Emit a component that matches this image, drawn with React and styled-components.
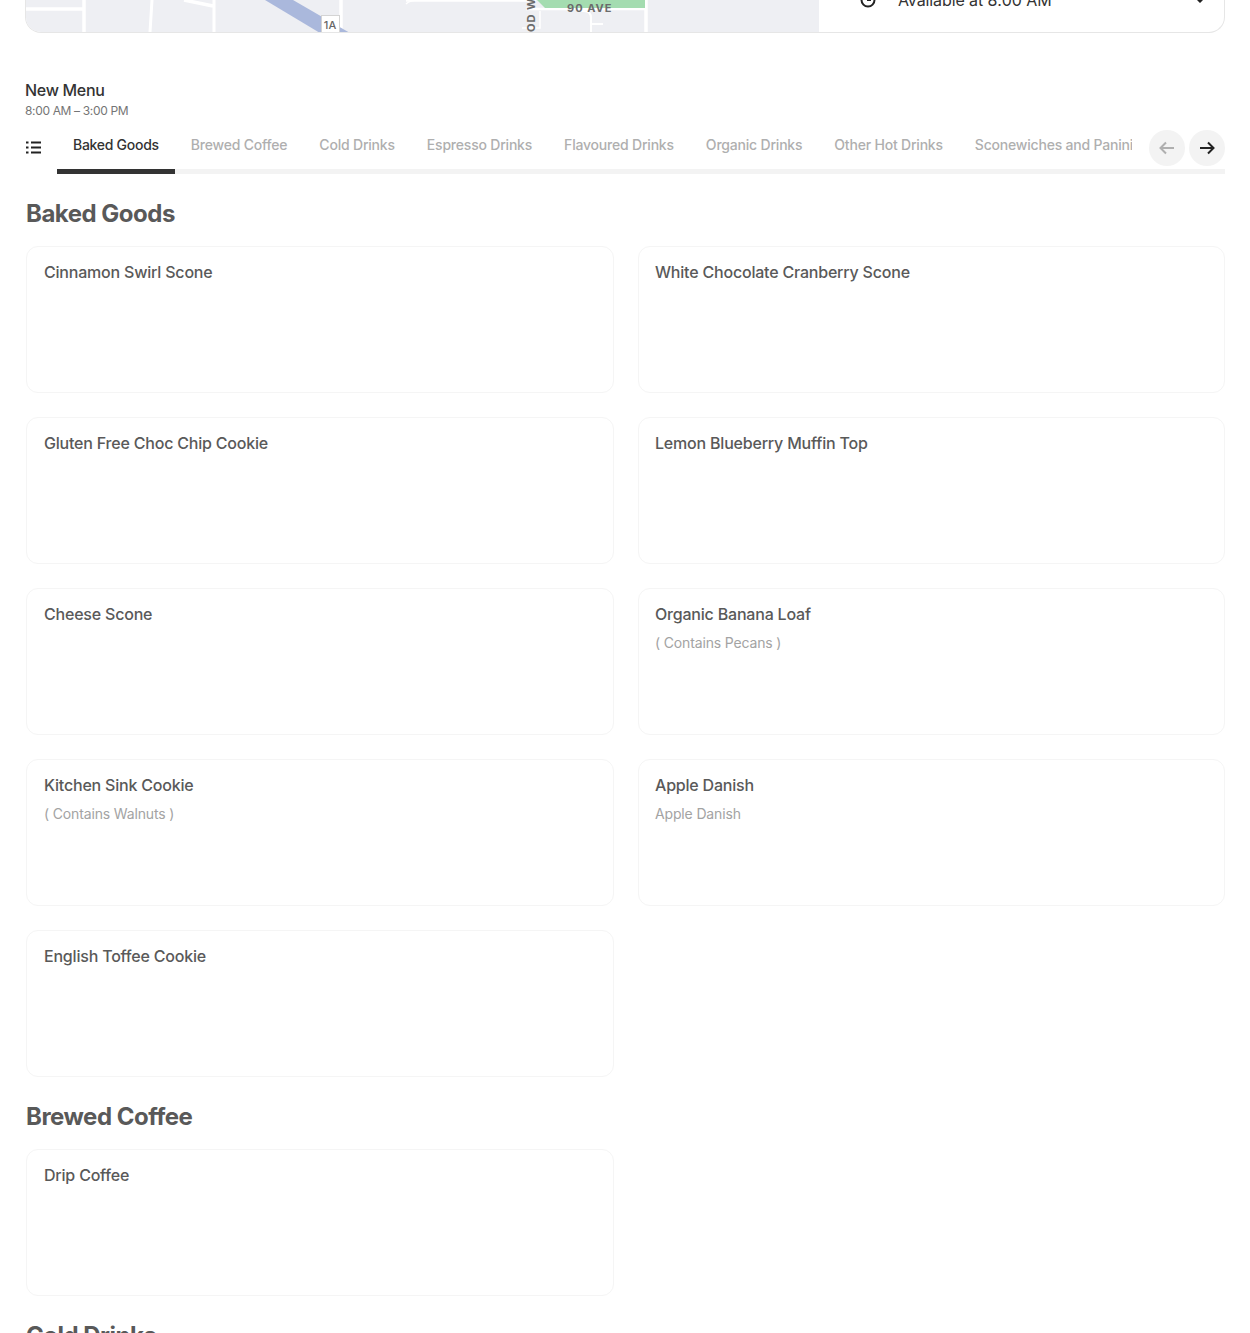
import React from 'react'
import styled, { createGlobalStyle } from 'styled-components'

const Global = createGlobalStyle`
  html, body {
    margin: 0;
    height: 1333px;
    overflow: hidden;
    background: #fff;
    font-family: Inter, "Liberation Sans", sans-serif;
    color: #333;
  }
`

const Page = styled.div`
  padding: 0 25px;
`

const StoreCard = styled.section`
  display: flex;
  align-items: flex-end;
  height: 33px;
  box-sizing: border-box;
  overflow: hidden;
  border: 1px solid #e6e6e6;
  border-top: 0;
  border-radius: 0 0 16px 16px;
`

const MapArea = styled.svg`
  display: block;
  flex: 0 0 793px;
  width: 793px;
  height: 32px;
  background: #eeeff3;
`

const Hours = styled.div`
  flex: 1;
  display: flex;
  align-items: center;
  height: 24px;
  margin-bottom: 20px;
  padding: 0 19px 0 41px;
  font-size: 16px;
  letter-spacing: -0.1px;
  color: #333;
`

const HoursText = styled.span`
  flex: 1;
  margin-left: 22px;
`

const MenuHead = styled.header`
  margin-top: 47px;
`

const MenuTitle = styled.h2`
  margin: 0;
  font-size: 16px;
  line-height: 20px;
  font-weight: 500;
  letter-spacing: -0.3px;
  color: #333;
`

const MenuHours = styled.div`
  margin-top: 2px;
  font-size: 12px;
  line-height: 18px;
  letter-spacing: -0.35px;
  color: #757575;
`

const TabRow = styled.nav`
  position: relative;
  display: flex;
  align-items: stretch;
  height: 46px;
  margin-top: 8px;
`

const MenuIcon = styled.svg`
  flex: none;
  width: 16px;
  height: 14px;
  margin: 13px 16px 0 0;
`

const TabTrack = styled.div`
  flex: 1;
  display: flex;
  overflow: hidden;
  box-shadow: inset 0 -5px 0 #f3f3f3;
`

const Tab = styled.div`
  flex: none;
  height: 46px;
  box-sizing: border-box;
  padding: 8px 16px 0;
  font-size: 14px;
  line-height: 18px;
  font-weight: 500;
  letter-spacing: ${p => (p.$active ? '-0.28px' : '-0.2px')};
  white-space: nowrap;
  color: ${p => (p.$active ? '#333' : '#afafaf')};
  border-bottom: 5px solid ${p => (p.$active ? '#333' : 'transparent')};
`

const ArrowBox = styled.div`
  position: absolute;
  top: 2px;
  right: 0;
  display: flex;
  gap: 4px;
  padding-left: 17px;
  background: #fff;
`

const ArrowButton = styled.div`
  display: flex;
  align-items: center;
  justify-content: center;
  width: 36px;
  height: 36px;
  border-radius: 50%;
  background: #f3f3f3;
  color: ${p => (p.$off ? '#afafaf' : '#222')};
`

const Section = styled.section`
  margin-left: 1px;
`

const SectionTitle = styled.h3`
  margin: 0;
  padding-top: 24px;
  height: 32px;
  font-size: 24px;
  line-height: 32px;
  font-weight: 700;
  letter-spacing: -0.5px;
  color: #595959;
`

const Grid = styled.div`
  display: grid;
  grid-template-columns: 588px 1fr;
  gap: 24px;
  margin-top: 16px;
`

const Card = styled.article`
  box-sizing: border-box;
  height: 147px;
  padding: 14px 17px;
  border: 1px solid #f5f5f5;
  border-radius: 12px;

  &:nth-child(even) {
    padding-left: 16px;
  }
`

const CardTitle = styled.div`
  font-size: 16px;
  line-height: 22px;
  font-weight: 500;
  letter-spacing: -0.2px;
  color: #595959;
`

const CardNote = styled.div`
  margin-top: 8px;
  font-size: 14px;
  line-height: 20px;
  letter-spacing: -0.15px;
  color: #a3a3a3;
`

const tabs = [
  'Baked Goods',
  'Brewed Coffee',
  'Cold Drinks',
  'Espresso Drinks',
  'Flavoured Drinks',
  'Organic Drinks',
  'Other Hot Drinks',
  'Sconewiches and Paninis',
]

const bakedGoods = [
  { name: 'Cinnamon Swirl Scone' },
  { name: 'White Chocolate Cranberry Scone' },
  { name: 'Gluten Free Choc Chip Cookie' },
  { name: 'Lemon Blueberry Muffin Top' },
  { name: 'Cheese Scone' },
  { name: 'Organic Banana Loaf', note: '( Contains Pecans )' },
  { name: 'Kitchen Sink Cookie', note: '( Contains Walnuts )' },
  { name: 'Apple Danish', note: 'Apple Danish' },
  { name: 'English Toffee Cookie' },
]

function MapDrawing() {
  // x/y here are page x minus 26, cropped to the bottom of the map
  return (
    <MapArea viewBox="0 0 793 32">
      <g stroke="#fff" fill="none" strokeWidth="3.5">
        <path d="M0 9H58" />
        <path d="M58 0V32" />
        <path d="M126 0L124 32" strokeWidth="3" />
        <path d="M158 0L187 6" />
        <path d="M188 0V32" strokeWidth="3" />
        <path d="M315 0V32" />
        <path d="M620 0V32" />
        <path d="M380 4C384 0 388 0 392 0" strokeWidth="1.5" />
        <path d="M380 0H510" />
        <path d="M500 9H620" strokeWidth="2.5" />
        <path d="M552 11H558Q565 11 565 18V32" strokeWidth="2" />
        <path d="M565 24H577" strokeWidth="2" />
        <path d="M514 11V28H496" strokeWidth="1.5" />
      </g>
      <path d="M239 0L267 0L324 33L294 33Z" fill="#aab8dc" />
      <path d="M511 0H619V8H519Z" fill="#a4dcb0" />
      <rect x="295.5" y="15.5" width="18" height="18" fill="#fff" stroke="#d4d4d4" />
      <text x="304" y="29" fontSize="11" textAnchor="middle" fill="#666" fontFamily="Inter, sans-serif" fontWeight="500">1A</text>
      <text x="541" y="12" fontSize="11" letterSpacing="1" fill="#6b6b6b" fontFamily="Inter, sans-serif" fontWeight="700">90 AVE</text>
      <text transform="translate(509 32) rotate(-90)" fontSize="11" letterSpacing="1" fill="#6b6b6b" fontFamily="Inter, sans-serif" fontWeight="700">OD W</text>
    </MapArea>
  )
}

function ClockIcon() {
  return (
    <svg width="16" height="16" viewBox="0 0 16 16" fill="none" stroke="#222" strokeWidth="2">
      <circle cx="8" cy="8" r="6.5" />
      <path d="M8 4.5V8H11" />
    </svg>
  )
}

function Chevron() {
  return (
    <svg width="10" height="8" viewBox="0 0 10 8" fill="#222">
      <path d="M0 2L1.5.5 5 4 8.5.5 10 2 5 7z" />
    </svg>
  )
}

function Arrow({ back }) {
  return (
    <svg width="16" height="14" viewBox="0 0 16 14" fill="none" stroke="currentColor" strokeWidth="2" style={back ? { transform: 'scaleX(-1)' } : undefined}>
      <path d="M1 7H14.5M9 1.5L14.5 7 9 12.5" />
    </svg>
  )
}

function Item({ item }) {
  return (
    <Card>
      <CardTitle>{item.name}</CardTitle>
      {item.note && <CardNote>{item.note}</CardNote>}
    </Card>
  )
}

export default function App() {
  return (
    <Page>
      <Global />
      <StoreCard>
        <MapDrawing />
        <Hours>
          <ClockIcon />
          <HoursText>Available at 8:00 AM</HoursText>
          <Chevron />
        </Hours>
      </StoreCard>
      <MenuHead>
        <MenuTitle>New Menu</MenuTitle>
        <MenuHours>8:00 AM – 3:00 PM</MenuHours>
      </MenuHead>
      <TabRow>
        <MenuIcon viewBox="0 0 16 14" fill="#222">
          <path d="M1 .5h2.5v2H1zM1 5.5h2.5v2H1zM1 10.5h2.5v2H1zM6 .5h10v2H6zM6 5.5h10v2H6zM6 10.5h10v2H6z" />
        </MenuIcon>
        <TabTrack>
          {tabs.map((t, i) => (
            <Tab key={t} $active={i === 0}>{t}</Tab>
          ))}
        </TabTrack>
        <ArrowBox>
          <ArrowButton $off><Arrow back /></ArrowButton>
          <ArrowButton><Arrow /></ArrowButton>
        </ArrowBox>
      </TabRow>
      <Section>
        <SectionTitle>Baked Goods</SectionTitle>
        <Grid>
          {bakedGoods.map(item => <Item key={item.name} item={item} />)}
        </Grid>
      </Section>
      <Section>
        <SectionTitle>Brewed Coffee</SectionTitle>
        <Grid>
          <Item item={{ name: 'Drip Coffee' }} />
        </Grid>
      </Section>
      <Section>
        <SectionTitle>Cold Drinks</SectionTitle>
      </Section>
    </Page>
  )
}
